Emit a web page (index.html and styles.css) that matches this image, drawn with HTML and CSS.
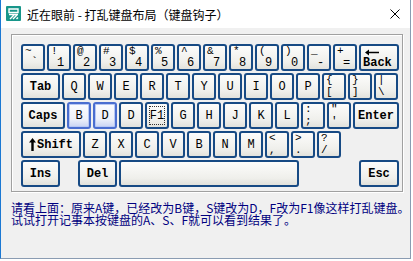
FILE: index.html
```html
<!DOCTYPE html>
<html lang="zh-CN">
<head>
	<meta charset="utf-8">
	<title>近在眼前 - 打乱键盘布局（键盘钩子）</title>
	<link rel="stylesheet" href="styles.css">
</head>
<body>
	<div class="window">
		<div class="titlebar">
			<svg class="app-icon" width="15" height="15" viewBox="0 0 15 15">
				<rect width="15" height="15" rx="1" fill="#17968a"/>
				<path d="M3 3h9v3.5H3z" fill="none" stroke="#fff" stroke-width="1.4"/>
				<path d="M3 8.5h9M4 13l4-4M7 13l4-4M10.5 13l1.5-1.5" fill="none" stroke="#fff" stroke-width="1.4"/>
			</svg>
			<span class="title">近在眼前 - 打乱键盘布局（键盘钩子）</span>
			<svg class="close" width="10" height="10" viewBox="0 0 10 10">
				<path d="M0.5 0.5L9.5 9.5M9.5 0.5L0.5 9.5" stroke="#000" stroke-width="1"/>
			</svg>
		</div>
		<div class="client">
			<div class="group">
				<div class="row">
					<div class="key sym num"><span>~</span><span class="b">`</span></div>
					<div class="key sym num"><span>!</span><span class="b">1</span></div>
					<div class="key sym num"><span>@</span><span class="b">2</span></div>
					<div class="key sym num"><span>#</span><span class="b">3</span></div>
					<div class="key sym num"><span>$</span><span class="b">4</span></div>
					<div class="key sym num"><span>%</span><span class="b">5</span></div>
					<div class="key sym num"><span>^</span><span class="b">6</span></div>
					<div class="key sym num"><span>&amp;</span><span class="b">7</span></div>
					<div class="key sym num"><span>*</span><span class="b">8</span></div>
					<div class="key sym num"><span>(</span><span class="b">9</span></div>
					<div class="key sym num"><span>)</span><span class="b">0</span></div>
					<div class="key sym num"><span>_</span><span class="b">-</span></div>
					<div class="key sym num"><span>+</span><span class="b">=</span></div>
					<div class="key back">
						<svg class="arrow" width="14" height="7" viewBox="0 0 14 7"><path d="M0 3.5L4 0.5V2.7H14V4.3H4V6.5z" fill="#000"/></svg>
						<span class="bold">Back</span>
					</div>
				</div>
				<div class="row">
					<div class="key bold w39">Tab</div>
					<div class="key">Q</div>
					<div class="key">W</div>
					<div class="key">E</div>
					<div class="key">R</div>
					<div class="key">T</div>
					<div class="key">Y</div>
					<div class="key">U</div>
					<div class="key">I</div>
					<div class="key">O</div>
					<div class="key">P</div>
					<div class="key sym"><span>{</span><span>[</span></div>
					<div class="key sym"><span>}</span><span>]</span></div>
					<div class="key sym"><span>|</span><span>\</span></div>
				</div>
				<div class="row">
					<div class="key bold w44">Caps</div>
					<div class="key hl">B</div>
					<div class="key hl">D</div>
					<div class="key">D</div>
					<div class="key focus">F1</div>
					<div class="key">G</div>
					<div class="key">H</div>
					<div class="key">J</div>
					<div class="key">K</div>
					<div class="key">L</div>
					<div class="key sym"><span>:</span><span>;</span></div>
					<div class="key sym"><span>"</span><span>'</span></div>
					<div class="key bold w46">Enter</div>
				</div>
				<div class="row">
					<div class="key bold w60">
						<svg class="up" width="7" height="13" viewBox="0 0 7 13"><path d="M3.5 0L7 4.5H4.7V13H2.3V4.5H0z" fill="#000"/></svg>Shift
					</div>
					<div class="key">Z</div>
					<div class="key">X</div>
					<div class="key">C</div>
					<div class="key">V</div>
					<div class="key">B</div>
					<div class="key">N</div>
					<div class="key">M</div>
					<div class="key sym"><span>&lt;</span><span>,</span></div>
					<div class="key sym"><span>&gt;</span><span>.</span></div>
					<div class="key sym"><span>?</span><span>/</span></div>
				</div>
				<div class="row">
					<div class="key bold w39">Ins</div>
					<div class="key bold w39 del">Del</div>
					<div class="key space"></div>
					<div class="key bold w40 esc">Esc</div>
				</div>
			</div>
			<p class="note">请看上面：原来A键，已经改为B键，S键改为D，F改为F1像这样打乱键盘。<br>试试打开记事本按键盘的A、S、F就可以看到结果了。</p>
		</div>
	</div>
</body>
</html>
```

FILE: styles.css
```css
*{
	margin: 0;
	padding: 0;
}
body{
	background: #fff;
}
.window{
	width: 411px;
	height: 259px;
	box-sizing: border-box;
	border-left: 1px solid #1b78d3;
	border-right: 1px solid #8a9cb2;
	border-bottom: 1px solid #8a9cb2;
	background: #f0f0f0;
	display: flex;
	flex-direction: column;
}
.titlebar{
	height: 28px;
	flex: none;
	background: #fff;
	display: flex;
	align-items: center;
	padding-left: 5px;
}
.app-icon{
	display: block;
	margin-top: -1px;
}
.title{
	margin-left: 6px;
	font: 12px "Noto Sans CJK SC", sans-serif;
	color: #000;
}
.close{
	display: block;
	margin-left: auto;
	margin-right: 10px;
}
.client{
	flex: 1;
	padding: 6px 0 0 10px;
}
/* 分组框 */
.group{
	width: 392px;
	height: 158px;
	box-sizing: border-box;
	border: 1px solid #a0a0a0;
	box-shadow: inset 1px 1px 0 #fff, 1px 1px 0 #fff;
	padding: 9px 0 0 9px;
}
.row{
	display: flex;
	gap: 2px;
	margin-bottom: 2px;
}
.key{
	width: 24px;
	height: 27px;
	box-sizing: border-box;
	border: 2px solid #174a84;
	border-radius: 3px;
	background: linear-gradient(#fcfcfb, #efefeb 70%, #e2e2dc);
	display: flex;
	align-items: center;
	justify-content: center;
	font: 12px "Liberation Mono", monospace;
	color: #000;
}
.key.bold,.key .bold{
	font-weight: bold;
}
.w39{ width: 39px; }
.w40{ width: 40px; }
.w44{ width: 44px; }
.w46{ width: 46px; }
.w60{ width: 60px; }
/* 上下两个字符的键 */
.key.sym{
	flex-direction: column;
	align-items: flex-start;
	justify-content: flex-start;
	padding-left: 2px;
	font-size: 11px;
}
.key.sym span{
	display: block;
	height: 11px;
	line-height: 11px;
}
.key.sym span + span{
	margin-top: 1px;
}
.key.num .b{
	margin-left: 6px;
	font-size: 12px;
}
.key.back{
	width: 40px;
	flex-direction: column;
	align-items: flex-start;
	justify-content: flex-start;
	padding-left: 2px;
}
.back .arrow{
	display: block;
	margin: 3px 0 1px 2px;
}
.back .bold{
	display: block;
	line-height: 12px;
}
.up{
	display: block;
	margin-right: 1px;
}
.key.hl{
	border-color: #4a6ed0;
	box-shadow: inset 0 0 0 1px #b8c8f4;
	background: linear-gradient(#fbfcff, #eef1fa 65%, #c9d4f4);
}
.key.focus{
	outline: 1px dotted #333;
	outline-offset: -5px;
}
.del{
	margin-left: 16px;
}
.space{
	width: 180px;
}
.esc{
	margin-left: 58px;
}
.note{
	margin: 10px 0 0 0;
	white-space: nowrap;
	font: 12px/12px "Noto Sans CJK SC", sans-serif;
	color: #000080;
}
```
